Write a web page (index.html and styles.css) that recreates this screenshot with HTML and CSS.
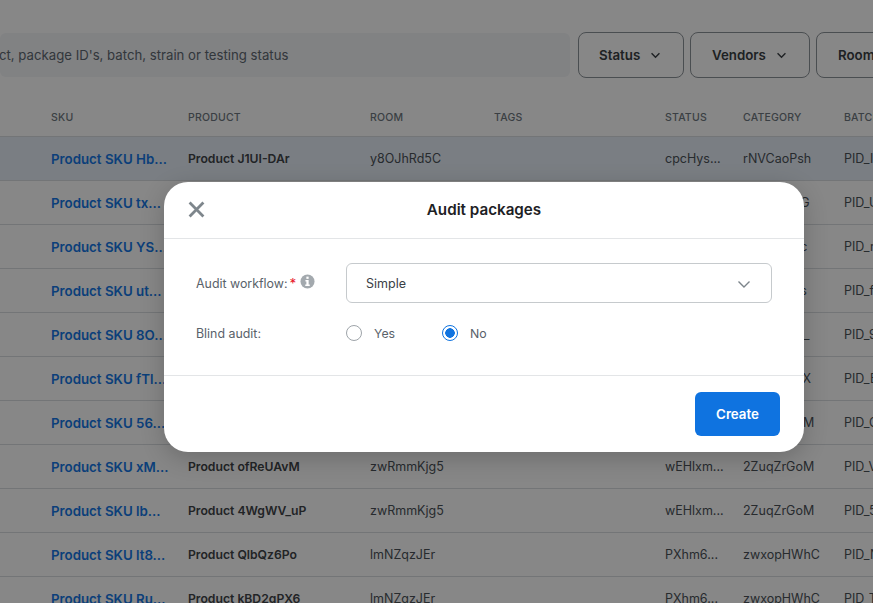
FILE: index.html
```html
<!DOCTYPE html>
<html lang="en">
<head>
<meta charset="utf-8">
<title>Audit packages</title>
<link rel="stylesheet" href="styles.css">
</head>
<body>
<main class="page">
  <div class="toolbar">
    <div class="search">Search by product, package ID's, batch, strain or testing status</div>
    <button class="filter filter-status">Status <svg class="caret" viewBox="0 0 12 8"><path d="M1.500 1.500 6 6l4.500-4.500"/></svg></button>
    <button class="filter filter-vendors">Vendors <svg class="caret" viewBox="0 0 12 8"><path d="M1.500 1.500 6 6l4.500-4.500"/></svg></button>
    <button class="filter filter-rooms">Rooms <svg class="caret" viewBox="0 0 12 8"><path d="M1.500 1.500 6 6l4.500-4.500"/></svg></button>
  </div>
  <div class="table">
    <div class="row head"><span>SKU</span><span>PRODUCT</span><span>ROOM</span><span>TAGS</span><span>STATUS</span><span>CATEGORY</span><span>BATCH</span></div>
    <div class="row selected"><a>Product SKU Hb...</a><b>Product J1UI-DAr</b><span>y8OJhRd5C</span><span></span><span>cpcHys...</span><span>rNVCaoPsh</span><span>PID_IxQ</span></div>
    <div class="row"><a>Product SKU tx...</a><b>Product aT2xQe</b><span>y8OJhRd5C</span><span></span><span>cpcHys...</span><span>rNVCaoPiG</span><span>PID_U4k</span></div>
    <div class="row"><a>Product SKU YS...</a><b>Product mK8dLp</b><span>y8OJhRd5C</span><span></span><span>cpcHys...</span><span>rNVCaoPic</span><span>PID_rT2</span></div>
    <div class="row"><a>Product SKU ut...</a><b>Product Zq4vNw</b><span>y8OJhRd5C</span><span></span><span>cpcHys...</span><span>rNVCaoPls</span><span>PID_f8a</span></div>
    <div class="row"><a>Product SKU 8O...</a><b>Product Hy7cRb</b><span>y8OJhRd5C</span><span></span><span>cpcHys...</span><span>rNVCaoPs_</span><span>PID_9Kd</span></div>
    <div class="row"><a>Product SKU fTl...</a><b>Product Jw3sUe</b><span>zwRmmKjg5</span><span></span><span>wEHlxm...</span><span>2ZuqZrGoX</span><span>PID_Em1</span></div>
    <div class="row"><a>Product SKU 56...</a><b>Product Pn6tYa</b><span>zwRmmKjg5</span><span></span><span>wEHlxm...</span><span>2ZuqZrGoM</span><span>PID_Cz5</span></div>
    <div class="row"><a>Product SKU xM...</a><b>Product ofReUAvM</b><span>zwRmmKjg5</span><span></span><span>wEHlxm...</span><span>2ZuqZrGoM</span><span>PID_Vb9</span></div>
    <div class="row"><a>Product SKU lb...</a><b>Product 4WgWV_uP</b><span>zwRmmKjg5</span><span></span><span>wEHlxm...</span><span>2ZuqZrGoM</span><span>PID_5hR</span></div>
    <div class="row"><a>Product SKU lt8...</a><b>Product QlbQz6Po</b><span>lmNZqzJEr</span><span></span><span>PXhm6...</span><span>zwxopHWhC</span><span>PID_Nq3</span></div>
    <div class="row"><a>Product SKU Ru...</a><b>Product kBD2gPX6</b><span>lmNZqzJEr</span><span></span><span>PXhm6...</span><span>zwxopHWhC</span><span>PID_Tw7</span></div>
  </div>
</main>
<div class="overlay">
  <section class="modal">
    <header class="modal-head">
      <svg class="close" viewBox="0 0 16 16"><path d="M1.500 1.500l13 13M14.500 1.500l-13 13"/></svg>
      <h1>Audit packages</h1>
    </header>
    <div class="modal-body">
      <div class="field field-workflow">
        <div class="label">Audit workflow:<span class="req">*</span>
          <svg class="info" viewBox="0 0 16 16"><circle cx="8" cy="8" r="7.500"/><rect x="6.800" y="2.800" width="2.400" height="2.400" class="glyph"/><path d="M5.800 6.500h3.400v4.700h1.200v1.600H5.600v-1.600h1.200V8.100h-1z" class="glyph"/></svg>
        </div>
        <div class="select"><span>Simple</span><svg class="select-caret" viewBox="0 0 14 9"><path d="M1.500 1.500 7 7l5.500-5.500"/></svg></div>
      </div>
      <div class="field field-blind">
        <div class="label">Blind audit:</div>
        <div class="radios">
          <label class="radio radio-yes"><i class="dot"></i>Yes</label>
          <label class="radio"><i class="dot on"></i>No</label>
        </div>
      </div>
    </div>
    <footer class="modal-foot"><button class="create">Create</button></footer>
  </section>
</div>
</body>
</html>
```
FILE: styles.css
```css
* { box-sizing: border-box; }
html, body { margin: 0; height: 100%; overflow: hidden; }
body { background: #fff; font-family: Inter, "Liberation Sans", sans-serif; color: #2b2f33; position: relative; }
.page { width: 1100px; padding-top: 33px; }
.toolbar { display: flex; align-items: center; gap: 6px; height: 44px; }
.search { width: 570px; height: 44px; background: #f3f5f8; border-radius: 6px; font-size: 13.200px; line-height: 44px; color: #5f6871; white-space: nowrap; text-indent: -104px; overflow: hidden; flex: none; }
.filter { height: 46px; border: 1px solid #8d9399; border-radius: 8px; background: #fff; font: 600 13.300px Inter, sans-serif; color: #3a3f44; display: flex; align-items: center; justify-content: flex-start; gap: 10px; padding: 0 0 0 20px; flex: none; }
.filter-status { width: 106px; margin-left: 2px; }
.filter-vendors { width: 120px; padding-left: 21px; }
.filter-rooms { width: 120px; padding-left: 21px; }
.caret { width: 11px; height: 7px; fill: none; stroke: #3a3f44; stroke-width: 1.600; }
.table { margin-top: 16px; }
.row { display: grid; grid-template-columns: 188px 182px 124px 171px 78px 101px 200px; height: 44px; align-items: center; border-bottom: 1px solid #d9dde1; font-size: 12.500px; color: #4a5157; white-space: nowrap; }
.row > :first-child { padding-left: 51px; }
.row a { color: #1678e6; font-weight: 600; font-size: 13.300px; }
.row b { color: #3f4448; font-weight: 600; font-size: 12.200px; }
.row.head { font-size: 10.500px; font-weight: 500; letter-spacing: .2px; color: #6f7880; padding-top: 6px; }
.row.selected { background: #e7eef7; }
.overlay { position: absolute; inset: 0; background: rgba(0,0,0,.47); }
.modal { position: absolute; left: 164px; top: 182px; width: 640px; height: 270px; background: #fff; border-radius: 24px; box-shadow: 0 6px 24px rgba(0,0,0,.2); display: flex; flex-direction: column; }
.modal-head { height: 57px; flex: none; border-bottom: 1px solid #e3e5e7; display: flex; align-items: center; justify-content: center; position: relative; }
.modal-head h1 { margin: 0 0 2px; font-size: 15.200px; font-weight: 600; color: #1d2124; }
.close { position: absolute; left: 24px; top: 19px; width: 17px; height: 17px; fill: none; stroke: #7e868c; stroke-width: 2.600; }
.modal-body { flex: none; height: 137px; border-bottom: 1px solid #e3e5e7; padding: 24px 32px 0; display: flex; flex-direction: column; gap: 22px; }
.field { display: flex; align-items: center; }
.label { width: 150px; font-size: 12.400px; color: #59626a; display: flex; align-items: center; flex: none; }
.req { color: #e8192c; margin-left: 2px; font-size: 13.500px; }
.info { width: 15px; height: 15px; margin-left: 4px; margin-top: -3px; fill: #a3a9ae; }
.info .glyph { fill: #fff; }
.select { width: 426px; height: 40px; border: 1px solid #c6cacd; border-radius: 6px; padding: 0 20px 0 19px; display: flex; align-items: center; justify-content: space-between; font-size: 12.500px; color: #3a4046; }
.select-caret { width: 14px; height: 9px; fill: none; stroke: #7c848a; stroke-width: 1.400; margin-top: 2px; }
.radios { display: flex; }
.radio { display: flex; align-items: center; font-size: 12.300px; color: #59626a; gap: 12px; }
.radio-yes { width: 96px; }
.dot { width: 16px; height: 16px; border: 1px solid #9ea4a9; border-radius: 50%; display: block; }
.dot.on { border: 1.500px solid #0f73e0; background: radial-gradient(circle, #0f73e0 0 4.500px, #fff 5px); }
.modal-foot { flex: 1; display: flex; justify-content: flex-end; padding: 16px 24px 0; }
.create { width: 85px; height: 44px; border: 0; border-radius: 6px; background: #0f73e0; color: #fff; font: 600 13.300px Inter, sans-serif; }
```
